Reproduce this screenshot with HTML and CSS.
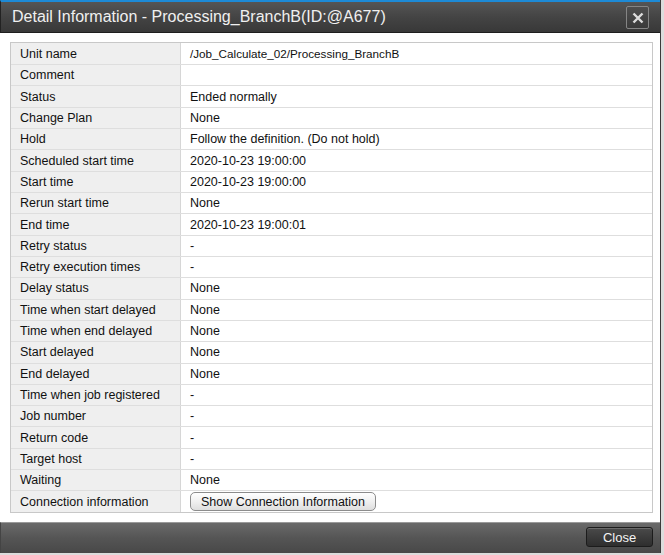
FILE: index.html
```html
<!DOCTYPE html>
<html>
<head>
<meta charset="utf-8">
<link rel="stylesheet" href="styles.css">
</head>
<body>
<div class="dialog">
  <div class="titlebar">
    <div class="title">Detail Information - Processing_BranchB(ID:@A677)</div>
    <div class="xbtn"><svg width="12" height="12" viewBox="0 0 12 12"><path d="M1.5 1.5 L10.5 10.5 M10.5 1.5 L1.5 10.5" stroke="#dcdcdc" stroke-width="2.4" stroke-linecap="butt"/></svg></div>
  </div>
  <div class="content">
    <div class="grid">
      <div class="row"><div class="lab">Unit name</div><div class="val small">/Job_Calculate_02/Processing_BranchB</div></div>
      <div class="row"><div class="lab">Comment</div><div class="val"></div></div>
      <div class="row"><div class="lab">Status</div><div class="val">Ended normally</div></div>
      <div class="row"><div class="lab">Change Plan</div><div class="val">None</div></div>
      <div class="row"><div class="lab">Hold</div><div class="val">Follow the definition. (Do not hold)</div></div>
      <div class="row"><div class="lab">Scheduled start time</div><div class="val">2020-10-23 19:00:00</div></div>
      <div class="row"><div class="lab">Start time</div><div class="val">2020-10-23 19:00:00</div></div>
      <div class="row"><div class="lab">Rerun start time</div><div class="val">None</div></div>
      <div class="row"><div class="lab">End time</div><div class="val">2020-10-23 19:00:01</div></div>
      <div class="row"><div class="lab">Retry status</div><div class="val">-</div></div>
      <div class="row"><div class="lab">Retry execution times</div><div class="val">-</div></div>
      <div class="row"><div class="lab">Delay status</div><div class="val">None</div></div>
      <div class="row"><div class="lab">Time when start delayed</div><div class="val">None</div></div>
      <div class="row"><div class="lab">Time when end delayed</div><div class="val">None</div></div>
      <div class="row"><div class="lab">Start delayed</div><div class="val">None</div></div>
      <div class="row"><div class="lab">End delayed</div><div class="val">None</div></div>
      <div class="row"><div class="lab">Time when job registered</div><div class="val">-</div></div>
      <div class="row"><div class="lab">Job number</div><div class="val">-</div></div>
      <div class="row"><div class="lab">Return code</div><div class="val">-</div></div>
      <div class="row"><div class="lab">Target host</div><div class="val">-</div></div>
      <div class="row"><div class="lab">Waiting</div><div class="val">None</div></div>
      <div class="row"><div class="lab">Connection information</div><div class="val"><button class="showbtn">Show Connection Information</button></div></div>
    </div>
  </div>
  <div class="footer">
    <button class="closebtn">Close</button>
  </div>
</div>
</body>
</html>
```
FILE: styles.css
```css
html, body {
  margin: 0;
  padding: 0;
}
body {
  width: 664px;
  height: 555px;
  background: #dcdcdc;
  font-family: "Liberation Sans", Arial, sans-serif;
  overflow: hidden;
}
.dialog {
  width: 661px;
  height: 553px;
  display: flex;
  flex-direction: column;
  background: #ffffff;
  border-right: 1px solid #3a3a3a;
  box-sizing: border-box;
}
.titlebar {
  height: 34px;
  box-sizing: border-box;
  border-top: 2px solid #1d8ad6;
  border-bottom: 1px solid #1e1e1e;
  border-left: 1px solid #222;
  background: linear-gradient(#555555, #444444 50%, #383838);
  display: flex;
  align-items: center;
  justify-content: space-between;
  padding: 0 11px 0 11px;
}
.title {
  color: #f0f0f0;
  font-size: 16px;
}
.xbtn {
  width: 21px;
  height: 21px;
  border: 1px solid #858585;
  border-radius: 2px;
  background: linear-gradient(#4e4e4e, #3a3a3a);
  display: flex;
  align-items: center;
  justify-content: center;
  margin-top: 1px;
}
.content {
  flex: 1;
  padding: 9px 7px 9px 10px;
  background: #fff;
}
.grid {
  border: 1px solid #c8c8c8;
  display: flex;
  flex-direction: column;
}
.row {
  height: 21.32px;
  box-sizing: border-box;
  display: grid;
  grid-template-columns: 170px 1fr;
  border-top: 1px solid #dedede;
}
.row:first-child {
  border-top: none;
  height: 20.9px;
}
.lab {
  background: #efefef;
  border-right: 1px solid #d6d6d6;
  padding-left: 9px;
  font-size: 12.5px;
  color: #111;
  display: flex;
  align-items: center;
}
.val {
  padding-left: 9px;
  font-size: 12.5px;
  color: #111;
  display: flex;
  align-items: center;
}
.val.small {
  font-size: 11.7px;
}
.showbtn {
  font-family: "Liberation Sans", Arial, sans-serif;
  font-size: 12.5px;
  color: #111;
  height: 19px;
  width: 186px;
  padding: 0;
  border: 1px solid #8c8c8c;
  border-radius: 5px;
  background: linear-gradient(#ffffff, #f0f0f0 50%, #dedede);
}
.footer {
  height: 32px;
  box-sizing: border-box;
  border-top: 1px solid #9a9a9a;
  border-left: 1px solid #444;
  background: linear-gradient(#6a6a6a, #555 50%, #484848);
  display: flex;
  align-items: center;
  justify-content: flex-end;
  padding: 0 7px 1px 0;
}
.closebtn {
  font-family: "Liberation Sans", Arial, sans-serif;
  font-size: 13px;
  color: #f4f4f4;
  width: 67px;
  height: 20px;
  padding: 0;
  border: 1px solid #1c1c1c;
  border-radius: 3px;
  background: linear-gradient(#4a4a4a, #2e2e2e);
  box-shadow: inset 0 1px 0 #6a6a6a;
}
```
